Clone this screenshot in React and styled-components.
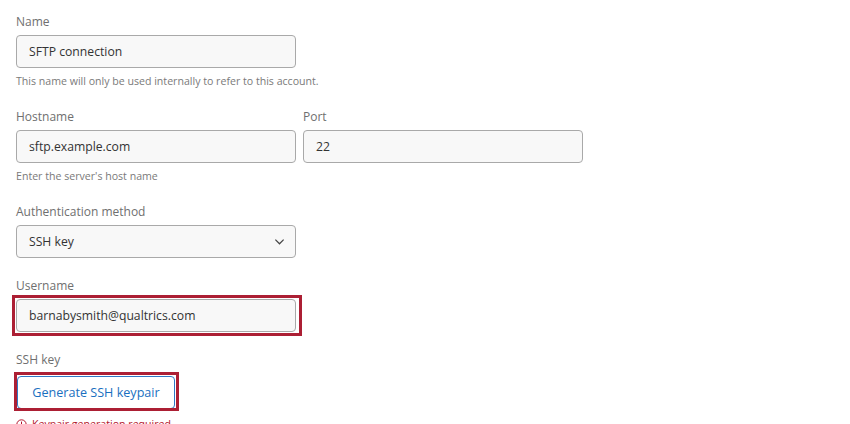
import React from 'react';
import styled, { createGlobalStyle } from 'styled-components';

const GlobalStyle = createGlobalStyle`
  html, body {
    margin: 0;
    padding: 0;
    height: 424px;
    overflow: hidden;
    background: #fff;
    font-family: "Open Sans", "Noto Sans", sans-serif;
  }
`;

const Page = styled.div`
  width: 850px;
  height: 424px;
  overflow: hidden;
  box-sizing: border-box;
  padding: 14px 0 0 16px;
`;

const Field = styled.div`
  width: 280px;
  margin-bottom: ${(p) => p.$gap || 0}px;
`;

const Row = styled.div`
  display: flex;
  gap: 7px;
`;

const Label = styled.div`
  height: 16px;
  line-height: 16px;
  margin-bottom: ${(p) => p.$below || 5}px;
  font-size: 12px;
  color: #6f6f6f;
`;

const Input = styled.div`
  box-sizing: border-box;
  height: 33px;
  width: 100%;
  display: flex;
  align-items: center;
  justify-content: space-between;
  padding: 0 12px;
  background: #f8f8f8;
  border: 1px solid #a9a9a9;
  border-radius: 4px;
  font-size: 12.2px;
  color: #333;
`;

const Help = styled.div`
  height: 16px;
  line-height: 16px;
  margin-top: 5px;
  font-size: 10.6px;
  white-space: nowrap;
  color: #7a7a7a;
`;

const Highlight = styled.div`
  position: relative;
  &::after {
    content: '';
    position: absolute;
    top: ${(p) => p.$top}px;
    left: ${(p) => p.$left}px;
    right: ${(p) => p.$right}px;
    bottom: ${(p) => p.$bottom}px;
    border: 3px solid #ac1f34;
    pointer-events: none;
  }
`;

const Button = styled.div`
  box-sizing: border-box;
  width: 158px;
  height: 33px;
  margin-left: 1px;
  display: flex;
  align-items: center;
  justify-content: center;
  background: #fff;
  border: 1px solid #2f78c4;
  border-radius: 4px;
  font-size: 12.6px;
  color: #1a6fc0;
`;

const ButtonHighlight = styled(Highlight)`
  width: 159px;
`;

const ErrorLine = styled.div`
  display: flex;
  align-items: center;
  gap: 5px;
  height: 16px;
  margin-top: 7px;
  font-size: 10.6px;
  color: #b3152c;
`;

const ChevronSvg = styled.svg`
  margin-right: -2px;
`;

const Chevron = () => (
  <ChevronSvg width="11" height="11" viewBox="0 0 12 12" fill="none" stroke="#444" strokeWidth="1.3">
    <path d="M1.5 4l4.5 4.5L10.5 4" />
  </ChevronSvg>
);

const AlertIcon = () => (
  <svg width="11" height="11" viewBox="0 0 11 11" fill="none" stroke="#b3152c" strokeWidth="1">
    <circle cx="5.5" cy="5.5" r="4.7" />
    <path d="M5.5 2.6v3.4M5.5 7.2v1" />
  </svg>
);

export default function App() {
  return (
    <Page>
      <GlobalStyle />
      <Field $gap={20}>
        <Label>Name</Label>
        <Input>SFTP connection</Input>
        <Help>This name will only be used internally to refer to this account.</Help>
      </Field>
      <Row>
        <Field $gap={20}>
          <Label>Hostname</Label>
          <Input>sftp.example.com</Input>
          <Help>Enter the server's host name</Help>
        </Field>
        <Field>
          <Label>Port</Label>
          <Input>22</Input>
        </Field>
      </Row>
      <Field $gap={20}>
        <Label>Authentication method</Label>
        <Input>
          SSH key
          <Chevron />
        </Input>
      </Field>
      <Field $gap={20}>
        <Label>Username</Label>
        <Highlight $top={-4} $left={-4} $right={-6} $bottom={-4}>
          <Input>barnabysmith@qualtrics.com</Input>
        </Highlight>
      </Field>
      <Field>
        <Label $below={8}>SSH key</Label>
        <ButtonHighlight $top={-4} $left={-2} $right={-4} $bottom={-2}>
          <Button>Generate SSH keypair</Button>
        </ButtonHighlight>
        <ErrorLine>
          <AlertIcon />
          Keypair generation required
        </ErrorLine>
      </Field>
    </Page>
  );
}
